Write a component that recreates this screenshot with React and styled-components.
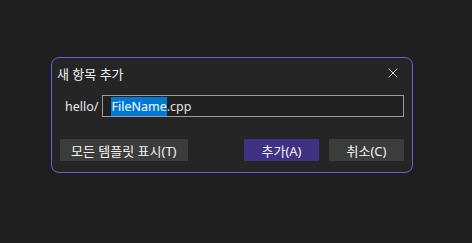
import React from 'react';
import styled, { createGlobalStyle } from 'styled-components';

const GlobalStyle = createGlobalStyle`
    html, body {
        margin: 0;
        padding: 0;
        background: #1f1f1f;
    }
    body {
        font-family: "Noto Sans", "Noto Sans CJK KR", sans-serif;
        font-size: 13px;
        color: #e6e6e6;
    }
`;

const Page = styled.div`
    width: 472px;
    height: 243px;
    padding: 57px 0 0 51px;
    box-sizing: border-box;
`;

const Dialog = styled.div`
    width: 362px;
    height: 116px;
    box-sizing: border-box;
    background: #252525;
    border: 1px solid #6a5bd8;
    border-radius: 8px;
    display: flex;
    flex-direction: column;
`;

const Header = styled.div`
    height: 30px;
    display: flex;
    align-items: center;
    justify-content: space-between;
    padding: 0 14px 0 5px;
`;

const Title = styled.div`
    font-size: 13px;
    color: #f0f0f0;
`;

const CloseButton = styled.button`
    width: 10px;
    height: 10px;
    padding: 0;
    border: none;
    background: none;
    display: flex;
    cursor: pointer;
`;

const PathRow = styled.div`
    display: flex;
    align-items: center;
    gap: 4px;
    margin-top: 7px;
    padding: 0 8px 0 13px;
    font-size: 12.5px;
`;

const Prefix = styled.span`
    color: #e8e8e8;
`;

const NameBox = styled.div`
    flex: 1;
    height: 22px;
    box-sizing: border-box;
    border: 1px solid #9c9c9c;
    background: #202020;
    display: flex;
    align-items: center;
    padding-left: 8px;
`;

const Selected = styled.span`
    background: #0078d4;
    color: #ffffff;
    padding: 1px 0;
`;

const Rest = styled.span`
    color: #e0e0e0;
`;

const Footer = styled.div`
    display: flex;
    align-items: center;
    gap: 10px;
    margin-top: 22px;
    padding: 0 8px 0 8px;
`;

const Button = styled.button`
    height: 22px;
    min-width: ${p => (p.$wide ? 'auto' : '75px')};
    padding: 0 11px;
    border: none;
    border-radius: 0;
    background: ${p => (p.$primary ? '#3f3282' : '#3c3c3c')};
    color: #f2f2f2;
    font-family: inherit;
    font-size: 13px;
    margin-left: ${p => (p.$push ? 'auto' : '0')};
`;

const CloseIcon = () => (
    <svg width="10" height="10" viewBox="0 0 10 10">
        <path d="M0.5 0.5 L9.5 9.5 M9.5 0.5 L0.5 9.5" stroke="#c8c8c8" strokeWidth="1" />
    </svg>
);

const App = () => {
    return (
        <>
            <GlobalStyle />
            <Page>
                <Dialog>
                    <Header>
                        <Title>새 항목 추가</Title>
                        <CloseButton aria-label="닫기">
                            <CloseIcon />
                        </CloseButton>
                    </Header>
                    <PathRow>
                        <Prefix>hello/</Prefix>
                        <NameBox>
                            <Selected>FileName</Selected>
                            <Rest>.cpp</Rest>
                        </NameBox>
                    </PathRow>
                    <Footer>
                        <Button $wide>모든 템플릿 표시(T)</Button>
                        <Button $primary $push>추가(A)</Button>
                        <Button>취소(C)</Button>
                    </Footer>
                </Dialog>
            </Page>
        </>
    );
};

export default App;
